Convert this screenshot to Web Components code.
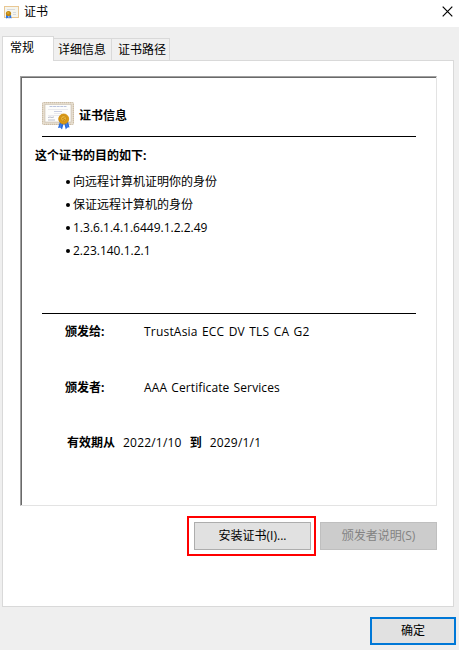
<!DOCTYPE html>
<html lang="zh-CN">
<head>
<meta charset="UTF-8">
<title>证书</title>
<style>
    body {
        margin: 0;
        font: 12px/20px "Open Sans", "Noto Sans CJK SC", sans-serif;
        color: #000;
        background: #efefef;
    }
</style>
</head>
<body>
<cert-dialog>
    <cert-titlebar slot="title">证书</cert-titlebar>
    <cert-tab slot="tabs" active>常规</cert-tab>
    <cert-tab slot="tabs">详细信息</cert-tab>
    <cert-tab slot="tabs" style="padding-left: 6px">证书路径</cert-tab>

    <cert-sheet>
        <span slot="title">证书信息</span>
        <span slot="heading">这个证书的目的如下:</span>
        <cert-purpose slot="purposes">向远程计算机证明你的身份</cert-purpose>
        <cert-purpose slot="purposes">保证远程计算机的身份</cert-purpose>
        <cert-purpose slot="purposes">1.3.6.1.4.1.6449.1.2.2.49</cert-purpose>
        <cert-purpose slot="purposes">2.23.140.1.2.1</cert-purpose>
        <cert-field style="letter-spacing: .2px; word-spacing: 1px"><b slot="label">颁发给:</b>TrustAsia ECC DV TLS CA G2</cert-field>
        <cert-field style="letter-spacing: .1px; word-spacing: 1px"><b slot="label">颁发者:</b>AAA Certificate Services</cert-field>
        <cert-validity><span slot="from">2022/1/10</span><span slot="to">2029/1/1</span></cert-validity>
    </cert-sheet>

    <cert-button slot="actions" marked>安装证书(I)...</cert-button>
    <cert-button slot="actions" disabled>颁发者说明(S)</cert-button>
    <cert-button slot="footer" primary>确定</cert-button>
</cert-dialog>

<script>
class CertElement extends HTMLElement {
    connectedCallback() {
        if (this.shadowRoot) return;
        this.attachShadow({ mode: 'open' });
        this.shadowRoot.innerHTML = this.render();
    }
}

class CertDialog extends CertElement {
    render() {
        return `
            <style>
                :host {
                    display: flex;
                    flex-direction: column;
                    width: 459px;
                    height: 650px;
                    overflow: hidden;
                }
                .tabs {
                    display: flex;
                    align-items: flex-end;
                    height: 24px;
                    margin: 9px 0 0 2px;
                }
                .panel {
                    box-sizing: border-box;
                    width: 452px;
                    height: 547px;
                    margin-left: 2px;
                    padding: 15px 0 0 17px;
                    border: 1px solid #d9d9d9;
                    background: #fff;
                }
                .actions {
                    display: flex;
                    justify-content: flex-end;
                    gap: 4px;
                    width: 417px;
                    margin-top: 10px;
                }
                .footer {
                    display: flex;
                    justify-content: flex-end;
                    padding: 10px 3px 0 0;
                }
            </style>
            <slot name="title"></slot>
            <div class="tabs"><slot name="tabs"></slot></div>
            <div class="panel">
                <slot></slot>
                <div class="actions"><slot name="actions"></slot></div>
            </div>
            <div class="footer"><slot name="footer"></slot></div>
        `;
    }
}

class CertIcon extends CertElement {
    render() {
        return `
            <style>
                :host { display: block; width: 32px; height: 29px; }
                svg { display: block; width: 100%; height: 100%; }
            </style>
            <svg viewBox="0 0 32 29" preserveAspectRatio="none">
                <rect x=".5" y="1.5" width="31" height="22" rx="1" fill="#e2d8c8" stroke="#cbbda7"/>
                <rect x="1" y="2" width="30" height="21" fill="none" stroke="#efe8dc" stroke-dasharray="1 1"/>
                <rect x="3" y="3.500" width="26" height="17.500" fill="#fdfdfb" stroke="#c9c0b1" stroke-width=".6"/>
                <path d="M7.500 5.500h17" stroke="#b9c2dd" stroke-dasharray="3 .6"/>
                <path d="M6 8.500h20M6 14.500h12M12 12.500h8" stroke="#e4e5ea" stroke-width=".8"/>
                <path d="M12 10.500h8" stroke="#bcc3dc" stroke-width=".8"/>
                <path d="M6 16.500l2-.5 2 .5 2-.6M6 19h7" fill="none" stroke="#a9adbf" stroke-width=".8"/>
                <path d="M18 20.500l4 1-2 7-1.800-2-2.200.5zM22 21.500l4-1 1.500 6-2-.3-1.700 2.300z" fill="#286bdc"/>
                <path d="M19.500 22l-1.500 5M24.500 22l1 5" stroke="#4d8ff5" stroke-width=".8"/>
                <circle cx="21.700" cy="18" r="5" fill="#dc9a12" stroke="#cd8c0c" stroke-width=".8"/>
                <circle cx="21.500" cy="17.500" r="2.900" fill="#edb836" stroke="#c08216" stroke-width=".8"/>
                <path d="M20 18l2.500-1.500M21 19.500l2-1.500" stroke="#b1740d" stroke-width=".8"/>
            </svg>
        `;
    }
}

class CertTitlebar extends CertElement {
    render() {
        return `
            <style>
                :host {
                    display: flex;
                    align-items: center;
                    box-sizing: border-box;
                    height: 27px;
                    padding: 0 6px 4px 4px;
                    background: #fff;
                }
                .app { width: 15px; height: 13px; margin: 2px 5px 0 0; }
                .close { width: 11px; height: 11px; margin-left: auto; }
            </style>
            <svg class="app" viewBox="0 0 15 13">
                <rect x=".5" y=".5" width="14" height="11" fill="#f5f5ee" stroke="#e9c793"/>
                <path d="M3 3.500h8M9 6.500h3M9 8.500h3" stroke="#d8dadd"/>
                <path d="M2 9h2.500v3.500L3.500 12l-1.500.5zM5 9h2l.5 3.500-1-.5-1 .5z" fill="#2c76e8"/>
                <circle cx="4.500" cy="7.500" r="2.600" fill="#bd8410"/>
                <circle cx="4.200" cy="7" r="1.200" fill="#dba42b"/>
            </svg>
            <slot></slot>
            <svg class="close" viewBox="0 0 11 11">
                <path d="M.7.700l9.600 9.600M10.300.700L.7 10.300" stroke="#000" stroke-width="1.200"/>
            </svg>
        `;
    }
}

class CertTab extends CertElement {
    render() {
        return `
            <style>
                :host {
                    box-sizing: border-box;
                    width: 58px;
                    height: 22px;
                    padding-left: 4px;
                    border: 1px solid #d9d9d9;
                    border-width: 1px 1px 0 0;
                    background: #f0f0f0;
                    white-space: nowrap;
                    line-height: 22px;
                }
                :host([active]) {
                    position: relative;
                    width: 52px;
                    height: 25px;
                    padding-left: 7px;
                    margin-bottom: -1px;
                    border-left-width: 1px;
                    background: #fff;
                    line-height: 21px;
                }
            </style>
            <slot></slot>
        `;
    }
}

class CertSheet extends CertElement {
    render() {
        return `
            <style>
                :host {
                    display: block;
                    box-sizing: border-box;
                    width: 417px;
                    height: 430px;
                    border: 1px solid;
                    border-color: #a0a0a0 #e3e3e3 #e3e3e3 #a0a0a0;
                    box-shadow: inset 1px 1px #696969;
                    padding: 23px 20px 0 21px;
                    background: #fff;
                }
                .head {
                    display: flex;
                    align-items: center;
                    gap: 5px;
                    height: 31px;
                    padding-bottom: 5px;
                    border-bottom: 1px solid #000;
                    font-weight: bold;
                }
                .heading { margin: 9px 0 0 -7px; font-weight: bold; }
                .purposes {
                    height: 143px;
                    padding: 4px 0 0 23px;
                    border-bottom: 1px solid #000;
                }
                .fields { padding: 8px 0 0 23px; }
            </style>
            <div class="head"><cert-icon></cert-icon><slot name="title"></slot></div>
            <div class="heading"><slot name="heading"></slot></div>
            <div class="purposes"><slot name="purposes"></slot></div>
            <div class="fields"><slot></slot></div>
        `;
    }
}

class CertPurpose extends CertElement {
    render() {
        return `
            <style>
                :host { display: flex; align-items: center; height: 23px; }
                i { width: 4px; height: 4px; margin: 1px 3px 0 1px; border-radius: 50%; background: #000; }
            </style>
            <i></i><slot></slot>
        `;
    }
}

class CertField extends CertElement {
    render() {
        return `
            <style>
                :host {
                    display: grid;
                    grid-template-columns: 79px 1fr;
                    height: 56px;
                }
                ::slotted(b) { letter-spacing: 0; }
            </style>
            <slot name="label"></slot>
            <span><slot></slot></span>
        `;
    }
}

class CertValidity extends CertElement {
    render() {
        return `
            <style>
                :host { display: flex; gap: 8px; margin: -1px 0 0 2px; }
                ::slotted(span) { letter-spacing: .2px; }
            </style>
            <b>有效期从</b><slot name="from"></slot><b>到</b><slot name="to"></slot>
        `;
    }
}

class CertButton extends CertElement {
    render() {
        return `
            <style>
                :host { display: block; margin: 6px 0; }
                button {
                    display: block;
                    box-sizing: border-box;
                    width: 117px;
                    height: 28px;
                    padding: 0;
                    border: 1px solid #adadad;
                    background: #e1e1e1;
                    color: #000;
                    font: inherit;
                }
                :host([disabled]) button { background: #ccc; border-color: #bfbfbf; color: #838383; }
                :host([primary]) { margin: 0; }
                :host([primary]) button { width: 86px; border: 2px solid #0078d7; }
                :host([marked]) {
                    box-sizing: border-box;
                    width: 129px;
                    height: 40px;
                    margin: 0;
                    padding: 4px 3px 4px 5px;
                    border: 2px solid #f00;
                }
            </style>
            <button ${this.hasAttribute('disabled') ? 'disabled' : ''}><slot></slot></button>
        `;
    }
}

customElements.define('cert-icon', CertIcon);
customElements.define('cert-titlebar', CertTitlebar);
customElements.define('cert-tab', CertTab);
customElements.define('cert-sheet', CertSheet);
customElements.define('cert-purpose', CertPurpose);
customElements.define('cert-field', CertField);
customElements.define('cert-validity', CertValidity);
customElements.define('cert-button', CertButton);
customElements.define('cert-dialog', CertDialog);
</script>
</body>
</html>
